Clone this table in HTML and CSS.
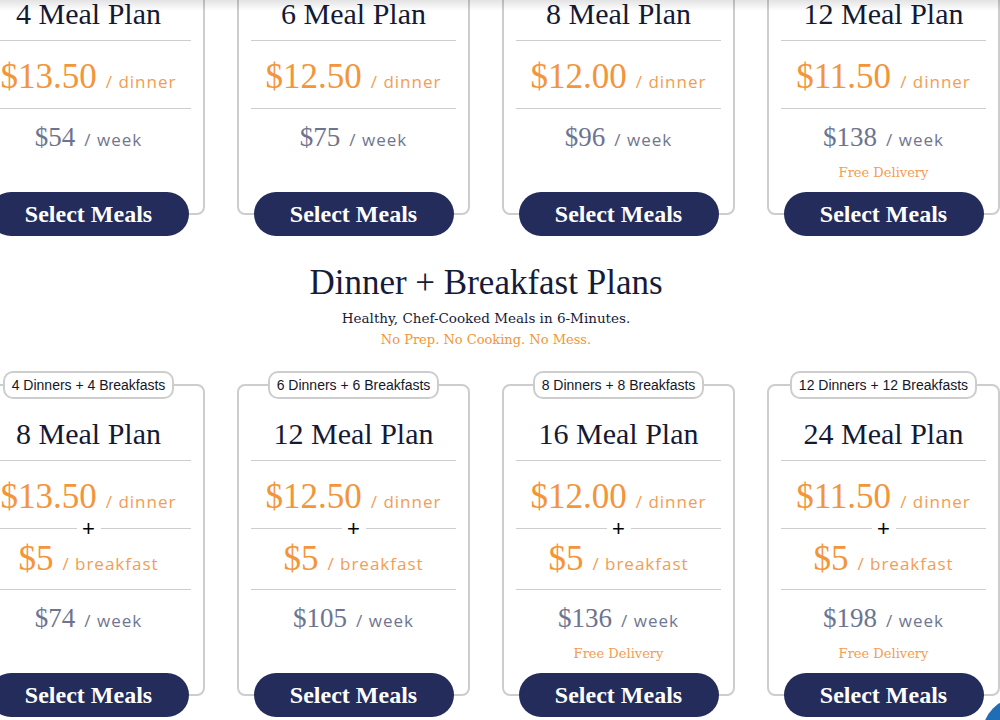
FILE: index.html
```html
<!DOCTYPE html>
<html lang="en">
<head>
<meta charset="utf-8">
<title>Meal Plans</title>
<link rel="stylesheet" href="styles.css">
</head>
<body>
<div class="top-shade"></div>
<main class="page">
  <section class="plans">
    <div class="grid">
      <div class="plan">
        <div class="card">
          <h3 class="title no-tag">4 Meal Plan</h3>
          <div class="line"></div>
          <div class="price-row"><span class="price">$13.50</span><span class="unit">/ dinner</span></div>
          <div class="line"></div>
          <div class="week-row"><span class="week">$54</span><span class="unit grey">/ week</span></div>
        </div>
        <button class="btn">Select Meals</button>
      </div>
      <div class="plan">
        <div class="card">
          <h3 class="title no-tag">6 Meal Plan</h3>
          <div class="line"></div>
          <div class="price-row"><span class="price">$12.50</span><span class="unit">/ dinner</span></div>
          <div class="line"></div>
          <div class="week-row"><span class="week">$75</span><span class="unit grey">/ week</span></div>
        </div>
        <button class="btn">Select Meals</button>
      </div>
      <div class="plan">
        <div class="card">
          <h3 class="title no-tag">8 Meal Plan</h3>
          <div class="line"></div>
          <div class="price-row"><span class="price">$12.00</span><span class="unit">/ dinner</span></div>
          <div class="line"></div>
          <div class="week-row"><span class="week">$96</span><span class="unit grey">/ week</span></div>
        </div>
        <button class="btn">Select Meals</button>
      </div>
      <div class="plan">
        <div class="card">
          <h3 class="title no-tag">12 Meal Plan</h3>
          <div class="line"></div>
          <div class="price-row"><span class="price">$11.50</span><span class="unit">/ dinner</span></div>
          <div class="line"></div>
          <div class="week-row"><span class="week">$138</span><span class="unit grey">/ week</span></div>
          <p class="free">Free Delivery</p>
        </div>
        <button class="btn">Select Meals</button>
      </div>
    </div>
  </section>

  <section class="plans">
    <h2 class="heading">Dinner + Breakfast Plans</h2>
    <p class="sub">Healthy, Chef-Cooked Meals in 6-Minutes.</p>
    <p class="sub orange">No Prep. No Cooking. No Mess.</p>
    <div class="grid second">
      <div class="plan">
        <div class="card">
          <span class="tag">4 Dinners + 4 Breakfasts</span>
          <h3 class="title">8 Meal Plan</h3>
          <div class="line"></div>
          <div class="price-row"><span class="price">$13.50</span><span class="unit">/ dinner</span></div>
          <div class="plus-line"><span class="plus">+</span></div>
          <div class="bf-row"><span class="price">$5</span><span class="unit">/ breakfast</span></div>
          <div class="line"></div>
          <div class="week-row"><span class="week">$74</span><span class="unit grey">/ week</span></div>
        </div>
        <button class="btn">Select Meals</button>
      </div>
      <div class="plan">
        <div class="card">
          <span class="tag">6 Dinners + 6 Breakfasts</span>
          <h3 class="title">12 Meal Plan</h3>
          <div class="line"></div>
          <div class="price-row"><span class="price">$12.50</span><span class="unit">/ dinner</span></div>
          <div class="plus-line"><span class="plus">+</span></div>
          <div class="bf-row"><span class="price">$5</span><span class="unit">/ breakfast</span></div>
          <div class="line"></div>
          <div class="week-row"><span class="week">$105</span><span class="unit grey">/ week</span></div>
        </div>
        <button class="btn">Select Meals</button>
      </div>
      <div class="plan">
        <div class="card">
          <span class="tag">8 Dinners + 8 Breakfasts</span>
          <h3 class="title">16 Meal Plan</h3>
          <div class="line"></div>
          <div class="price-row"><span class="price">$12.00</span><span class="unit">/ dinner</span></div>
          <div class="plus-line"><span class="plus">+</span></div>
          <div class="bf-row"><span class="price">$5</span><span class="unit">/ breakfast</span></div>
          <div class="line"></div>
          <div class="week-row"><span class="week">$136</span><span class="unit grey">/ week</span></div>
          <p class="free">Free Delivery</p>
        </div>
        <button class="btn">Select Meals</button>
      </div>
      <div class="plan">
        <div class="card">
          <span class="tag">12 Dinners + 12 Breakfasts</span>
          <h3 class="title">24 Meal Plan</h3>
          <div class="line"></div>
          <div class="price-row"><span class="price">$11.50</span><span class="unit">/ dinner</span></div>
          <div class="plus-line"><span class="plus">+</span></div>
          <div class="bf-row"><span class="price">$5</span><span class="unit">/ breakfast</span></div>
          <div class="line"></div>
          <div class="week-row"><span class="week">$198</span><span class="unit grey">/ week</span></div>
          <p class="free">Free Delivery</p>
        </div>
        <button class="btn">Select Meals</button>
      </div>
    </div>
  </section>
</main>
<div class="chat-bubble"></div>
</body>
</html>
```

FILE: styles.css
```css
html, body {
  margin: 0;
  padding: 0;
  background: #ffffff;
  overflow: hidden;
}

body {
  width: 1000px;
  height: 720px;
  font-family: "Liberation Serif", serif;
  color: #151a36;
}

.top-shade {
  position: fixed;
  left: 0;
  top: 0;
  width: 100%;
  height: 11px;
  background: linear-gradient(to bottom, rgba(0, 0, 0, 0.11), rgba(0, 0, 0, 0));
  z-index: 10;
  pointer-events: none;
}

.chat-bubble {
  position: fixed;
  right: -58px;
  bottom: -53px;
  width: 76px;
  height: 76px;
  border-radius: 50%;
  background: #1f6db5;
  z-index: 10;
}

.page {
  margin-top: -35px;
}

.plans {
  display: flex;
  flex-direction: column;
  align-items: center;
  margin-left: -28px;
  width: 1028px;
}

.grid {
  display: grid;
  grid-template-columns: repeat(4, 233px);
  column-gap: 32px;
  width: 100%;
}

.grid.second {
  margin-top: 34px;
}

.plan {
  display: flex;
  flex-direction: column;
  align-items: center;
}

.card {
  box-sizing: border-box;
  width: 100%;
  flex: 1;
  border: 2px solid #cdcdcd;
  border-radius: 8px;
  padding: 0 12px 31px;
  display: flex;
  flex-direction: column;
  align-items: stretch;
  background: #fff;
}

.tag {
  align-self: center;
  box-sizing: border-box;
  height: 28px;
  margin-top: -15px;
  padding: 0 7px;
  border: 2px solid #cdcdcd;
  border-radius: 10px;
  background: #fff;
  font-family: "Liberation Sans", sans-serif;
  font-size: 14px;
  line-height: 24px;
  color: #14172a;
  white-space: nowrap;
}

.title {
  margin: 17px 0 8px;
  font-family: "Liberation Serif", serif;
  font-weight: 400;
  font-size: 30px;
  line-height: 36px;
  text-align: center;
  color: #141a35;
}

.title.no-tag {
  margin-top: 29px;
}

.line {
  border-top: 1px solid #cdcdcd;
}

.price-row, .bf-row, .week-row {
  display: flex;
  justify-content: center;
  align-items: baseline;
  box-sizing: border-box;
}

.price-row > *, .bf-row > * {
  line-height: 40px;
}

.price-row {
  height: 67px;
  padding-top: 16px;
}

.bf-row {
  height: 60px;
  padding-top: 10px;
}

.price {
  font-family: "Liberation Serif", serif;
  font-size: 35px;
  color: #f3953a;
}

.unit {
  font-family: "Open Sans", sans-serif;
  font-size: 17px;
  letter-spacing: 1px;
  color: #f39d52;
  margin-left: 9px;
}

.unit.grey {
  color: #6f7691;
}

.plus-line {
  height: 1px;
  display: flex;
  align-items: center;
  justify-content: center;
  background: #cdcdcd;
}

.plus {
  display: block;
  width: 24px;
  height: 1px;
  background: #fff;
  font-family: "Liberation Sans", sans-serif;
  font-size: 22px;
  line-height: 1px;
  text-align: center;
  color: #000;
}

.week-row {
  height: 44px;
  padding-top: 12px;
}

.week-row > * {
  line-height: 32px;
}

.week {
  font-family: "Liberation Serif", serif;
  font-size: 27px;
  color: #6d7490;
}

.free {
  margin: 11px 0 0;
  font-family: "DejaVu Serif", serif;
  font-size: 13px;
  line-height: 18px;
  text-align: center;
  color: #f39d52;
}

.btn {
  position: relative;
  z-index: 1;
  margin-top: -23px;
  width: 200px;
  height: 44px;
  border: none;
  border-radius: 22px;
  background: #242c5c;
  color: #ffffff;
  font-family: "Liberation Serif", serif;
  font-weight: 700;
  font-size: 24px;
  line-height: 44px;
  padding: 0;
  cursor: pointer;
}

.heading {
  margin: 27px 0 0;
  font-family: "Liberation Serif", serif;
  font-weight: 400;
  font-size: 35px;
  line-height: 40px;
  color: #161b3a;
}

.sub {
  margin: 0;
  font-family: "DejaVu Serif", serif;
  font-size: 13.5px;
  line-height: 21px;
  color: #161b3a;
}

.heading + .sub {
  margin-top: 5px;
}

.sub.orange {
  font-size: 13px;
  color: #f39535;
}
```
